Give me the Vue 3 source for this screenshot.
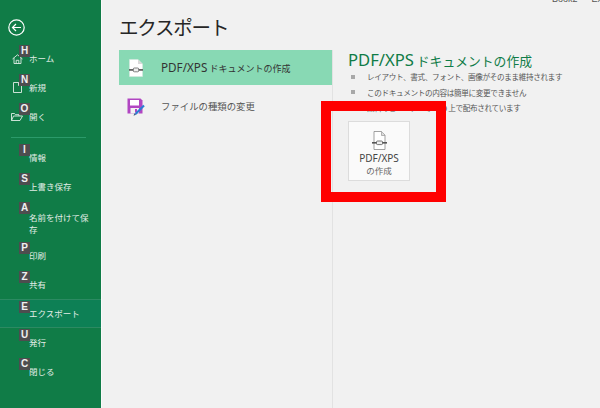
<script setup>
const groupA = [
  { key: 'H', label: 'ホーム', icon: 'home' },
  { key: 'N', label: '新規', icon: 'new' },
  { key: 'O', label: '開く', icon: 'open' },
]
const groupB = [
  { key: 'I', label: '情報' },
  { key: 'S', label: '上書き保存' },
  { key: 'A', label: '名前を付けて保存', tall: true },
  { key: 'P', label: '印刷' },
  { key: 'Z', label: '共有' },
  { key: 'E', label: 'エクスポート', active: true },
  { key: 'U', label: '発行' },
  { key: 'C', label: '閉じる' },
]
const bullets = [
  'レイアウト、書式、フォント、画像がそのまま維持されます',
  'このドキュメントの内容は簡単に変更できません',
  '無料のビューアーで Web 上で配布されています',
]
</script>

<template>
  <div class="page">
    <aside class="side">
      <svg class="back" width="17" height="17" viewBox="0 0 17 17" fill="none" stroke="#fff" stroke-width="1.2">
        <circle cx="8.500" cy="8.500" r="7.700" />
        <path d="M13 8.500H4.500M8 5 4.500 8.500 8 12" />
      </svg>
      <ul class="menu first">
        <li v-for="m in groupA" :key="m.key" class="item">
          <span class="tip">{{ m.key }}</span>
          <span class="ico">
            <svg v-if="m.icon === 'home'" width="11" height="10" viewBox="0 0 11 10" fill="none" stroke="#dfece5" stroke-width="0.9">
              <path d="M.5 5 5.500.8l5 4.200M2 3.800v5.700h7V3.800M4.200 9.500V6.300h2.600v3.200" />
            </svg>
            <svg v-else-if="m.icon === 'new'" width="9" height="11" viewBox="0 0 9 11" fill="none" stroke="#dfece5" stroke-width="0.9">
              <path d="M.5.500h5l3 3v7h-8zM5.500.500v3h3" />
            </svg>
            <svg v-else width="12" height="8" viewBox="0 0 12 8" fill="none" stroke="#dfece5" stroke-width="0.9">
              <path d="M.5 7.500V.5h3l1 1.200h3.500v1.300M.5 7.500l2-4.500h9l-2.500 4.500z" />
            </svg>
          </span>
          <span class="label">{{ m.label }}</span>
        </li>
      </ul>
      <div class="rule"></div>
      <ul class="menu">
        <li v-for="m in groupB" :key="m.key" class="item" :class="{ active: m.active, tall: m.tall }">
          <span class="tip">{{ m.key }}</span>
          <span class="label">{{ m.label }}</span>
        </li>
      </ul>
    </aside>

    <main class="main">
      <div class="docname">Book2 - Excel</div>
      <div class="cols">
        <section class="left">
          <h1 class="title">エクスポート</h1>
          <div class="list">
            <div class="row selected">
              <svg class="rowicon" width="14" height="18" viewBox="0 0 14 18">
                <path d="M.5.500h8.500l4.500 4.500v12.500H.5z" fill="#fff" stroke="#d8e8e0" stroke-width=".6" />
                <path d="M9 .500V5h4.500z" fill="#d9d9d9" />
                <rect x="0" y="10" width="14" height="1.800" fill="#666" />
                <rect x="4.300" y="9" width="5.400" height="3.800" rx="1" fill="#eee" stroke="#666" stroke-width=".8" />
              </svg>
              <span class="rowtext"><span class="lat">PDF/XPS</span> ドキュメントの作成</span>
            </div>
            <div class="row second">
              <svg class="rowicon" width="19" height="18" viewBox="0 0 19 18">
                <path d="M.5.500h13l2 2V15.500H.5z" fill="#b146c2" />
                <rect x="3" y="2" width="9" height="5.500" fill="#fff" />
                <rect x="3.500" y="10" width="8.500" height="5.500" fill="#f3f3f3" />
                <rect x="8" y="11" width="2" height="3.500" fill="#b146c2" />
                <path d="M8.500 16 17 7.500" stroke="#2b7cd3" stroke-width="2.200" />
                <path d="M6.500 17.800l1-2.600 1.600 1.600z" fill="#3a5a80" />
              </svg>
              <span class="rowtext muted">ファイルの種類の変更</span>
            </div>
          </div>
        </section>

        <section class="right">
          <h2 class="heading"><span class="lat">PDF/XPS</span> ドキュメントの作成</h2>
          <ul class="bullets">
            <li v-for="b in bullets" :key="b"><i class="sq"></i>{{ b }}</li>
          </ul>
          <button class="btn">
            <svg width="15" height="19" viewBox="0 0 15 19">
              <path d="M2 .5h7.500l3.500 3.500v14.500H2z" fill="#fff" stroke="#8a8a8a" stroke-width=".8" />
              <path d="M9.500.500V4.500H13" fill="#ddd" stroke="#8a8a8a" stroke-width=".6" />
              <rect x="0" y="11" width="15" height="1.600" fill="#555" />
              <rect x="4.500" y="10" width="6" height="3.600" rx="1" fill="#eee" stroke="#555" stroke-width=".8" />
            </svg>
            <span class="btntext">PDF/XPS<br /><span class="sub">の作成</span></span>
          </button>
        </section>
      </div>
      <div class="redframe"></div>
    </main>
  </div>
</template>

<style>
html, body { margin: 0; padding: 0; }
</style>

<style scoped>
.page {
  display: flex;
  width: 600px;
  height: 408px;
  overflow: hidden;
  background: #f1f1f1;
  font-family: "Noto Sans CJK JP", "Noto Sans", sans-serif;
}
.side {
  width: 101px;
  flex: none;
  height: 408px;
  background: #107c47;
  color: #e0ede6;
  display: flex;
  flex-direction: column;
  border-right: 1px solid #fafafa;
}
.back { margin: 19px 0 0 8px; flex: none; }
.menu { list-style: none; margin: 0; padding: 0; }
.menu.first { margin-top: 8.500px; }
.item {
  position: relative;
  height: 29px;
  display: flex;
  align-items: center;
  padding-left: 29px;
  box-sizing: border-box;
  font-size: 8.500px;
  line-height: 12px;
}
.label { position: relative; top: -1px; }
.item.tall { height: 40px; padding-right: 8px; align-items: flex-start; padding-top: 10px; }
.item.active {
  background: #0d8055;
  border-top: 1px solid #2c8a62;
  border-bottom: 1px solid #2c8a62;
  margin-top: -1px;
  margin-bottom: 1px;
}
.item.active .label { top: 0; }
.ico {
  position: absolute;
  left: 11px;
  top: 5px;
  width: 12px;
  height: 18px;
  display: flex;
  align-items: center;
  justify-content: center;
}
.tip {
  position: absolute;
  left: 19px;
  top: 0;
  width: 11px;
  height: 12px;
  background: #4d4d4f;
  color: #f0f0f0;
  font: bold 10px/12px "Liberation Sans", sans-serif;
  text-align: center;
  z-index: 1;
}
.item.active .tip { top: 1px; }
.rule { height: 1px; margin: 5px 15px 6px 11px; background: #2b9a6a; flex: none; }
.main { position: relative; flex: 1; min-width: 0; }
.docname {
  position: absolute;
  left: 450px;
  top: -7px;
  font: 9px/12px "Liberation Sans", sans-serif;
  color: #555;
  word-spacing: 3px;
  white-space: nowrap;
}
.cols { display: flex; height: 408px; padding-left: 17px; }
.left { width: 214px; flex: none; display: flex; flex-direction: column; }
.title {
  margin: 0;
  padding: 13px 0 0 0;
  height: 50px;
  box-sizing: border-box;
  font-size: 19.500px;
  letter-spacing: -1.200px;
  line-height: 28px;
  font-weight: 400;
  color: #262626;
  flex: none;
}
.list { flex: 1; border-right: 1px solid #e2e2e2; }
.row {
  height: 35px;
  display: flex;
  align-items: center;
  position: relative;
  padding-left: 42px;
  font-size: 9px;
  color: #333;
}
.rowtext { position: relative; top: -1px; white-space: nowrap; }
.rowicon { position: absolute; left: 10px; top: 9px; }
.row.selected { background: #88d9b4; }
.row.second { padding-top: 4px; height: 36px; }
.row.second .rowicon { left: 8px; top: 13px; }
.row.second .rowtext { font-size: 9.400px; }
.lat { font-family: "Noto Sans", sans-serif; font-size: 1.300em; }
.muted { color: #555; }
.right { flex: 1; padding: 0 0 0 15px; }
.heading {
  margin: 50px 0 0;
  font-size: 12.800px;
  line-height: 19px;
  height: 19px;
  font-weight: 400;
  color: #107c47;
  white-space: nowrap;
}
.bullets {
  list-style: none;
  margin: 0;
  padding: 0;
  font-size: 7.600px;
  letter-spacing: -0.350px;
  color: #555;
}
.bullets li { height: 15.500px; line-height: 15px; display: flex; align-items: center; white-space: nowrap; }
.sq { width: 4px; height: 4px; background: #a8a8a8; margin: 0 12px 0 3px; flex: none; }
.btn {
  display: flex;
  margin-top: 5px;
  width: 62px;
  height: 60px;
  box-sizing: border-box;
  background: #fafafa;
  border: 1px solid #dcdcdc;
  padding: 9px 0 0;
  flex-direction: column;
  align-items: center;
  font-family: inherit;
  color: #444;
}
.btntext { margin-top: 2px; font-size: 10px; line-height: 12px; text-align: center; font-family: "Noto Sans", "Noto Sans CJK JP", sans-serif; white-space: nowrap; }
.sub { font-size: 8.500px; color: #666; }
.redframe {
  position: absolute;
  left: 219px;
  top: 101px;
  width: 125px;
  height: 101px;
  box-sizing: border-box;
  border: 10px solid #ff0000;
  pointer-events: none;
}
</style>
